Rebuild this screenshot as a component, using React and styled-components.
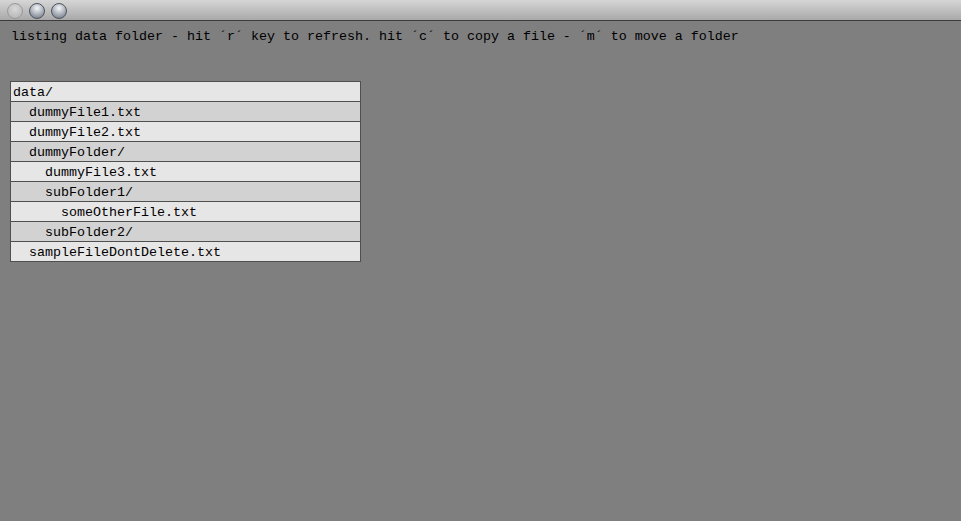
import React from "react";
import styled, { createGlobalStyle } from "styled-components";

const GlobalStyle = createGlobalStyle`
  html, body {
    margin: 0;
    padding: 0;
    background: #7f7f7f;
  }
  #root {
    min-height: 521px;
  }
`;

const Window = styled.div`
  width: 961px;
  height: 521px;
  display: flex;
  flex-direction: column;
  background: #7f7f7f;
  overflow: hidden;
  font-family: "Liberation Mono", "DejaVu Sans Mono", monospace;
  font-size: 13.33px;
  color: #000;
`;

const TitleBar = styled.div`
  height: 20px;
  flex: none;
  display: flex;
  align-items: center;
  gap: 6px;
  padding-left: 7px;
  background: linear-gradient(#d6d6d6, #a9a9a9);
  border-bottom: 1px solid #3c3c3c;
  box-sizing: content-box;
`;

const Light = styled.span`
  width: 16px;
  height: 16px;
  border-radius: 50%;
  box-sizing: border-box;
  border: 1px solid ${(p) => (p.$dim ? "#9a9a9a" : "#4f5560")};
  background: ${(p) =>
    p.$dim
      ? "radial-gradient(circle at 50% 35%, #d8d8d8 0%, #c2c2c2 55%, #b0b0b0 100%)"
      : "radial-gradient(circle at 50% 30%, #f4f6f8 0%, #c3c8d0 35%, #8a919c 75%, #6d7480 100%)"};
  margin-top: 1px;
`;

const Content = styled.div`
  flex: 1;
  padding: 9px 0 0 10px;
  display: flex;
  flex-direction: column;
  align-items: flex-start;
`;

const Hint = styled.div`
  height: 14px;
  line-height: 14px;
  padding-left: 1px;
  white-space: pre;
`;

const FileList = styled.div`
  margin-top: 37px;
  width: 351px;
  border-top: 1px solid #4f4f4f;
  box-sizing: border-box;
`;

const Row = styled.div`
  height: 18px;
  padding-top: 1px;
  line-height: 19px;
  border: 1px solid #4f4f4f;
  border-top: none;
  background: ${(p) => (p.$odd ? "#d2d2d2" : "#e6e6e6")};
  padding-left: ${(p) => 2 + p.$depth * 16}px;
  white-space: pre;
`;

const entries = [
  { name: "data/", depth: 0 },
  { name: "dummyFile1.txt", depth: 1 },
  { name: "dummyFile2.txt", depth: 1 },
  { name: "dummyFolder/", depth: 1 },
  { name: "dummyFile3.txt", depth: 2 },
  { name: "subFolder1/", depth: 2 },
  { name: "someOtherFile.txt", depth: 3 },
  { name: "subFolder2/", depth: 2 },
  { name: "sampleFileDontDelete.txt", depth: 1 },
];

export default function App() {
  return (
    <>
      <GlobalStyle />
      <Window>
        <TitleBar>
          <Light $dim />
          <Light />
          <Light />
        </TitleBar>
        <Content>
          <Hint>
            listing data folder - hit ´r´ key to refresh. hit ´c´ to copy a file - ´m´ to move a folder
          </Hint>
          <FileList>
            {entries.map((e, i) => (
              <Row key={e.name} $depth={e.depth} $odd={i % 2 === 1}>
                {e.name}
              </Row>
            ))}
          </FileList>
        </Content>
      </Window>
    </>
  );
}
